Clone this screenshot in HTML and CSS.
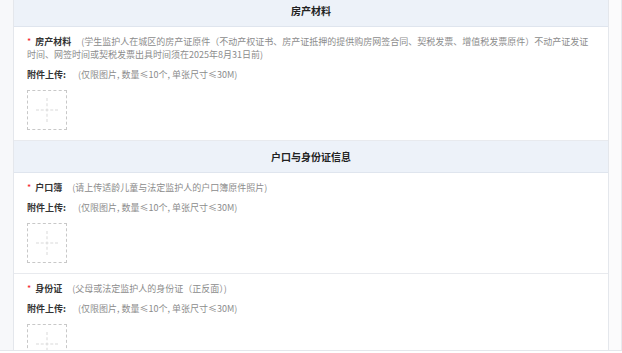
FILE: index.html
```html
<!DOCTYPE html>
<html lang="zh-CN">
<head>
    <meta charset="UTF-8">
    <meta name="viewport" content="width=device-width, initial-scale=1.0">
    <title>材料上传</title>
    <link rel="stylesheet" href="styles.css">
</head>
<body>
    <div class="page">
        <div class="panel">
            <!-- 房产材料 -->
            <div class="section-title">房产材料</div>
            <div class="item">
                <div class="item-head">
                    <span class="req">*</span><span class="item-name">房产材料</span><span class="item-desc">(学生监护人在城区的房产证原件（不动产权证书、房产证抵押的提供购房网签合同、契税发票、增值税发票原件）不动产证发证时间、网签时间或契税发票出具时间须在2025年8月31日前)</span>
                </div>
                <div class="upload-row">
                    <span class="upload-label">附件上传:</span><span class="upload-tip">(仅限图片, 数量≤10个, 单张尺寸≤30M)</span>
                </div>
                <div class="upload-box"></div>
            </div>

            <!-- 户口与身份证信息 -->
            <div class="section-title">户口与身份证信息</div>
            <div class="item">
                <div class="item-head">
                    <span class="req">*</span><span class="item-name">户口簿</span><span class="item-desc">(请上传适龄儿童与法定监护人的户口簿原件照片)</span>
                </div>
                <div class="upload-row">
                    <span class="upload-label">附件上传:</span><span class="upload-tip">(仅限图片, 数量≤10个, 单张尺寸≤30M)</span>
                </div>
                <div class="upload-box"></div>
            </div>
            <div class="item">
                <div class="item-head">
                    <span class="req">*</span><span class="item-name">身份证</span><span class="item-desc">(父母或法定监护人的身份证（正反面）)</span>
                </div>
                <div class="upload-row">
                    <span class="upload-label">附件上传:</span><span class="upload-tip">(仅限图片, 数量≤10个, 单张尺寸≤30M)</span>
                </div>
                <div class="upload-box"></div>
            </div>
        </div>
        <div class="rail"></div>
    </div>
    <div class="footer"></div>
</body>
</html>
```

FILE: styles.css
```css
html, body {
    margin: 0;
    padding: 0;
    height: 100%;
    overflow: hidden;
}

body {
    font-family: "Noto Sans CJK SC", "Liberation Sans", sans-serif;
    background: #f7f8fa;
    color: #333;
    font-size: 9px;
}

.page {
    display: flex;
    margin-top: -5px;
    padding-left: 13px;
}

.panel {
    flex: 1;
    background: #fff;
    border-left: 1px solid #e4e7ec;
    border-right: 1px solid #e4e7ec;
}

.rail {
    width: 12px;
    background: #fbfbfc;
    border-right: 1px solid #e8eaee;
}

.section-title {
    height: 31px;
    line-height: 31px;
    text-align: center;
    background: #edf2f9;
    border-bottom: 1px solid #dfe5ee;
    font-size: 10px;
    font-weight: bold;
    color: #222;
}

.item {
    padding: 8px 12px 10px 13px;
    border-bottom: 1px solid #e8eaee;
    line-height: 13px;
}

.item:last-child {
    border-bottom: none;
}

.req {
    color: #f5222d;
    margin-right: 4px;
}

.item-name {
    font-weight: bold;
    color: #333;
}

.item-desc {
    color: #8c8c8c;
    margin-left: 10px;
}

.upload-row {
    margin-top: 7px;
}

.upload-label {
    font-weight: bold;
    color: #333;
}

.upload-tip {
    color: #8c8c8c;
    margin-left: 12px;
}

.upload-box {
    position: relative;
    width: 38px;
    height: 38px;
    margin-top: 9px;
    border: 1px dashed #c8c8c8;
}

.upload-box::before,
.upload-box::after {
    content: '';
    position: absolute;
    left: 50%;
    top: 50%;
    transform: translate(-50%, -50%);
    border-color: #d9d9d9;
    border-style: dashed;
    border-width: 0;
}

.upload-box::before {
    width: 22px;
    border-top-width: 1px;
}

.upload-box::after {
    height: 24px;
    border-left-width: 1px;
}

.footer {
    position: fixed;
    left: 0;
    right: 0;
    bottom: 0;
    height: 2px;
    background: #fff;
    border-top: 1px solid #e4e7ec;
}
```
